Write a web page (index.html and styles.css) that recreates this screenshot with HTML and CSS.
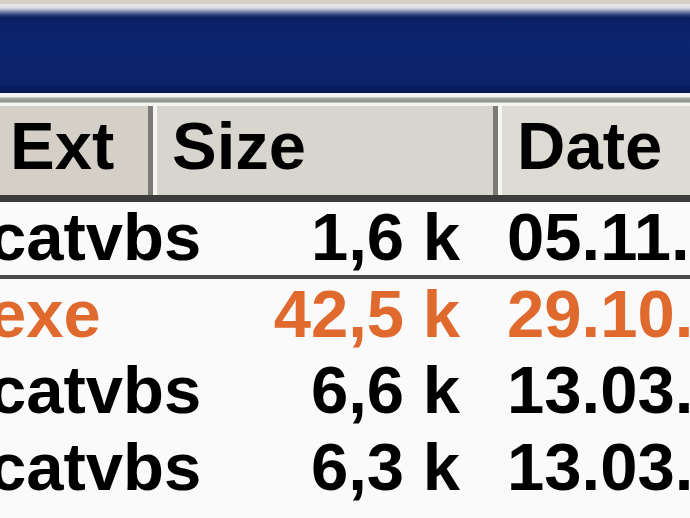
FILE: index.html
```html
<!DOCTYPE html>
<html>
<head>
<meta charset="utf-8">
<link rel="stylesheet" href="styles.css">
</head>
<body>
<div class="panel">
  <div class="top-strip"></div>
  <div class="path-bar"></div>
  <div class="path-edge"></div>
  <div class="header">
    <div class="hcell h-ext">Ext</div>
    <div class="hcell h-size">Size</div>
    <div class="hcell h-date">Date</div>
  </div>
  <div class="rows">
    <div class="row cursor">
      <span class="ext">catvbs</span><span class="size">1,6 k</span><span class="date">05.11.2004 10:21</span>
    </div>
    <div class="row exec">
      <span class="ext">exe</span><span class="size">42,5 k</span><span class="date">29.10.2004 16:02</span>
    </div>
    <div class="row">
      <span class="ext">catvbs</span><span class="size">6,6 k</span><span class="date">13.03.2004 09:12</span>
    </div>
    <div class="row">
      <span class="ext">catvbs</span><span class="size">6,3 k</span><span class="date">13.03.2004 09:12</span>
    </div>
  </div>
</div>
</body>
</html>
```
FILE: styles.css
```css
html, body {
  margin: 0;
  padding: 0;
  background: #fafafa;
  overflow: hidden;
  width: 690px;
  height: 518px;
}

.panel {
  font-family: "Liberation Sans", Arial, sans-serif;
  font-weight: bold;
  font-size: 67px;
  color: #000;
  width: 690px;
  overflow: hidden;
}

.top-strip {
  height: 4px;
  background: #d4d0c8;
}

.path-bar {
  height: 89px;
  background: linear-gradient(to bottom,
    #e6e6ea 0px, #dcdee4 4px, #8a96b4 7px, #2a3c7c 11px,
    #0a1d5e 14px, #0b2168 18px, #0c2570 40px, #0b2369 80px,
    #081c5e 84px, #051656 89px);
}

.path-edge {
  height: 13px;
  background: linear-gradient(to bottom,
    #f2f4f0 0px, #f2f4f0 4px, #a4a8a0 5px, #8e928a 9px,
    #f4f4f0 10px, #f4f4f0 13px);
}

.header {
  display: flex;
  height: 96px;
  background: #d4d0c8;
  box-sizing: border-box;
  border-bottom: 7px solid #3c3c3c;
  box-shadow: inset 0 -4px 0 #8a8884;
}

.hcell {
  display: flex;
  align-items: center;
  box-sizing: border-box;
  padding-bottom: 10px;
  flex-shrink: 0;
  white-space: nowrap;
}

.h-ext {
  width: 153px;
  padding-left: 10px;
  border-right: 5px solid #7c7a76;
  background: #d4d0c8;
}

.h-size {
  width: 345px;
  padding-left: 15px;
  border-left: 4px solid #f6f6f2;
  border-right: 5px solid #7c7a76;
  background: #d8d5ce;
}

.h-date {
  flex: 1;
  padding-left: 15px;
  border-left: 4px solid #f6f6f2;
  background: #dedbd5;
}

.rows {
  background: #fafafa;
}

.row {
  display: flex;
  line-height: 66px;
  height: 66px;
  padding-top: 2px;
  padding-bottom: 8.5px;
  white-space: nowrap;
}

.row.cursor {
  padding-bottom: 4.5px;
  border-bottom: 4px solid #4a4a4c;
}

.row.exec {
  color: #e0692e;
}

.ext {
  flex-shrink: 0;
  width: 164px;
  margin-left: -11px;
}

.size {
  flex-shrink: 0;
  width: 307px;
  text-align: right;
}

.date {
  flex-shrink: 0;
  padding-left: 47px;
}
```
